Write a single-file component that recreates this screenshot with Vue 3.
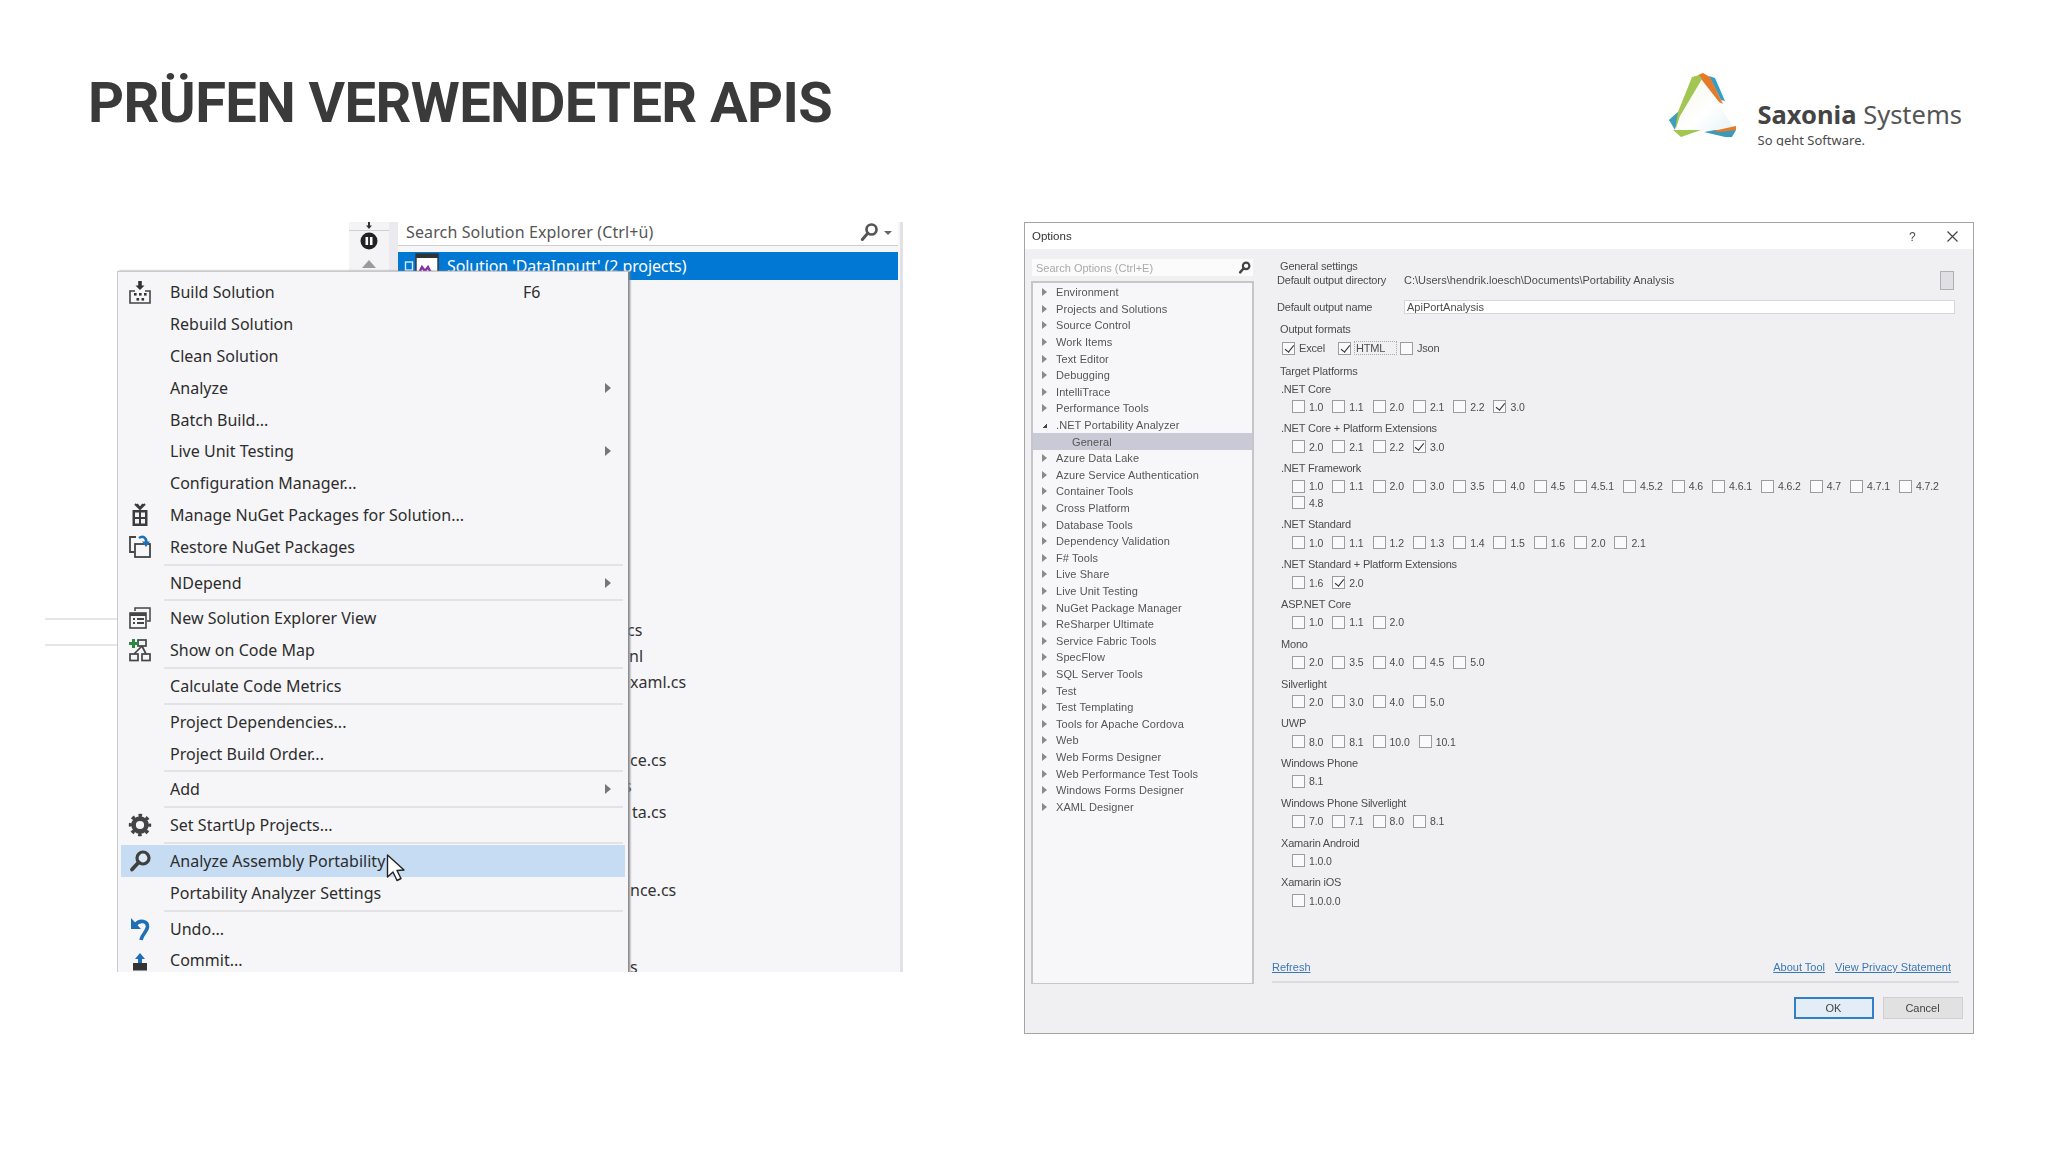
<script setup>
const menu = [
  { t: 'Build Solution', i: 'build', k: 'F6' },
  { t: 'Rebuild Solution' },
  { t: 'Clean Solution' },
  { t: 'Analyze', sub: true },
  { t: 'Batch Build...' },
  { t: 'Live Unit Testing', sub: true },
  { t: 'Configuration Manager...' },
  { t: 'Manage NuGet Packages for Solution...', i: 'nuget' },
  { t: 'Restore NuGet Packages', i: 'restore' },
  { sep: true },
  { t: 'NDepend', sub: true },
  { sep: true },
  { t: 'New Solution Explorer View', i: 'view' },
  { t: 'Show on Code Map', i: 'map' },
  { sep: true },
  { t: 'Calculate Code Metrics' },
  { sep: true },
  { t: 'Project Dependencies...' },
  { t: 'Project Build Order...' },
  { sep: true },
  { t: 'Add', sub: true },
  { sep: true },
  { t: 'Set StartUp Projects...', i: 'gear' },
  { sep: true },
  { t: 'Analyze Assembly Portability', i: 'search', hot: true },
  { t: 'Portability Analyzer Settings' },
  { sep: true },
  { t: 'Undo...', i: 'undo' },
  { t: 'Commit...', i: 'commit' }
]

const fragments = { 14: ['cs', 229], 15: ['nl', 231], 16: ['xaml.cs', 232], 19: ['ce.cs', 232], 20: ['s', 226], 21: ['ta.cs', 234], 24: ['nce.cs', 232], 27: ['s', 232] }
const fileRows = Array.from({ length: 28 }, (_, n) => fragments[n + 1] || null)

const tree = [
  'Environment', 'Projects and Solutions', 'Source Control', 'Work Items', 'Text Editor', 'Debugging', 'IntelliTrace',
  'Performance Tools', '.NET Portability Analyzer', 'General', 'Azure Data Lake', 'Azure Service Authentication',
  'Container Tools', 'Cross Platform', 'Database Tools', 'Dependency Validation', 'F# Tools', 'Live Share',
  'Live Unit Testing', 'NuGet Package Manager', 'ReSharper Ultimate', 'Service Fabric Tools', 'SpecFlow',
  'SQL Server Tools', 'Test', 'Test Templating', 'Tools for Apache Cordova', 'Web', 'Web Forms Designer',
  'Web Performance Test Tools', 'Windows Forms Designer', 'XAML Designer'
]

const groups = [
  { l: '.NET Core', v: ['1.0', '1.1', '2.0', '2.1', '2.2', '3.0'], on: ['3.0'] },
  { l: '.NET Core + Platform Extensions', v: ['2.0', '2.1', '2.2', '3.0'], on: ['3.0'] },
  { l: '.NET Framework', v: ['1.0', '1.1', '2.0', '3.0', '3.5', '4.0', '4.5', '4.5.1', '4.5.2', '4.6', '4.6.1', '4.6.2', '4.7', '4.7.1', '4.7.2', '4.8'], on: [] },
  { l: '.NET Standard', v: ['1.0', '1.1', '1.2', '1.3', '1.4', '1.5', '1.6', '2.0', '2.1'], on: [] },
  { l: '.NET Standard + Platform Extensions', v: ['1.6', '2.0'], on: ['2.0'] },
  { l: 'ASP.NET Core', v: ['1.0', '1.1', '2.0'], on: [] },
  { l: 'Mono', v: ['2.0', '3.5', '4.0', '4.5', '5.0'], on: [] },
  { l: 'Silverlight', v: ['2.0', '3.0', '4.0', '5.0'], on: [] },
  { l: 'UWP', v: ['8.0', '8.1', '10.0', '10.1'], on: [] },
  { l: 'Windows Phone', v: ['8.1'], on: [] },
  { l: 'Windows Phone Silverlight', v: ['7.0', '7.1', '8.0', '8.1'], on: [] },
  { l: 'Xamarin Android', v: ['1.0.0'], on: [] },
  { l: 'Xamarin iOS', v: ['1.0.0.0'], on: [] }
]
</script>

<template>
  <div class="slide">
    <header class="head">
      <h1 class="title">PRÜFEN VERWENDETER APIS</h1>
      <div class="logo">
        <svg class="logo-mark" width="75" height="70" viewBox="0 0 75 70">
          <defs>
            <linearGradient id="lgw" x1="0" y1="0" x2="1" y2="1">
              <stop offset="0" stop-color="#f3f6e6" />
              <stop offset="0.6" stop-color="#ffffff" />
              <stop offset="1" stop-color="#e6f2f4" />
            </linearGradient>
          </defs>
          <path d="M34 6 L6 60 L36 60 L68 60 Z" fill="url(#lgw)" />
          <path d="M42 6 L48 8 L58 31 L54 30 Z" fill="#2e9fc9" />
          <path d="M31 5 L36 3 L43 7 L56 34 L52 32 Z" fill="#e67a2b" />
          <path d="M25 7 L32 5 L35 9 L13 46 L9 58 L2 50 L11 42 Z" fill="#a3c552" />
          <path d="M2 50 L11 42 L8 60 Z" fill="#3f9fb8" />
          <path d="M6 60 L14 67 L34 60 L12 60 Z" fill="#a3c552" />
          <path d="M37 62 L48 60 L69 60 L65 67 L58 67 Z" fill="#3a9bb9" />
          <path d="M46 61 L69 56 L69 60 L52 62 Z" fill="#e67a2b" />
        </svg>
        <div class="logo-text">
          <div class="logo-name"><b>Saxonia</b> Systems</div>
          <div class="logo-tag"><span>So geht Software.</span></div>
        </div>
      </div>
    </header>

    <main class="stage">
      <section class="vs">
        <i class="ghost-line first"></i>
        <i class="ghost-line second"></i>

        <div class="explorer">
          <div class="tools">
            <svg class="tool-down" width="10" height="7" viewBox="0 0 10 7"><path d="M5 7 L2 3.5 H4 V0 H6 V3.5 H8 Z" fill="#333" /></svg>
            <div class="tool-rule"></div>
            <svg class="tool-pause" width="18" height="18" viewBox="0 0 18 18">
              <circle cx="9" cy="9" r="8.5" fill="#222" />
              <rect x="5.5" y="5" width="2.6" height="8" fill="#fff" />
              <rect x="9.9" y="5" width="2.6" height="8" fill="#fff" />
            </svg>
            <svg class="tool-up" width="14" height="8" viewBox="0 0 14 8"><path d="M7 0 L14 8 H0 Z" fill="#9a9a9e" /></svg>
          </div>
          <div class="strip"></div>
          <div class="files">
            <div class="search">
              <span>Search Solution Explorer (Ctrl+ü)</span>
              <svg class="search-ico" width="20" height="20" viewBox="0 0 24 24">
                <circle cx="15" cy="9" r="6" fill="none" stroke="#555" stroke-width="3.2" />
                <path d="M10.5 13.5 L4 21" stroke="#555" stroke-width="3.6" stroke-linecap="round" />
              </svg>
              <i class="search-drop"></i>
            </div>
            <div class="solution">
              <svg class="sol-ico" width="36" height="27" viewBox="0 0 36 27">
                <rect x="1.5" y="9" width="7" height="8" fill="none" stroke="#d8ecfa" stroke-width="1.4" />
                <rect x="12" y="1" width="22" height="26" fill="#fff" stroke="#333" stroke-width="1.4" />
                <rect x="12" y="1" width="22" height="4" fill="#333" />
                <path d="M15 20 L18 14 L21 18 L24 14 L27 20" fill="none" stroke="#8a2da8" stroke-width="2.4" />
              </svg>
              <span>Solution 'DataInputt' (2 projects)</span>
            </div>
            <div v-for="(r, n) in fileRows" :key="n" class="file-row" :style="r ? { paddingLeft: r[1] + 'px' } : null">
              <span v-if="r">{{ r[0] }}</span>
            </div>
          </div>
          <div class="edge"></div>
        </div>

        <div class="menu">
          <template v-for="(m, n) in menu" :key="n">
            <div v-if="m.sep" class="msep"></div>
            <div v-else class="mrow" :class="{ hot: m.hot }">
              <span class="mico">
                <svg v-if="m.i === 'build'" width="24" height="24" viewBox="0 0 24 24">
                  <path d="M12 10 L7.5 5.5 H10.2 V1 H13.8 V5.5 H16.5 Z" fill="#333" />
                  <path d="M7 11 H2 V23 H22 V11 H17" fill="none" stroke="#444" stroke-width="1.6" />
                  <g fill="#333"><rect x="6" y="13" width="2.6" height="2.6" /><rect x="11" y="13" width="2.6" height="2.6" /><rect x="16" y="13" width="2.6" height="2.6" /><rect x="8.5" y="18" width="2.6" height="2.6" /><rect x="13.5" y="18" width="2.6" height="2.6" /></g>
                </svg>
                <svg v-else-if="m.i === 'nuget'" width="24" height="24" viewBox="0 0 24 24">
                  <path d="M7 1 L12 6 L17 1 M9 1 L12 5 L15 1" fill="none" stroke="#3c3c3c" stroke-width="2" />
                  <rect x="4.5" y="7" width="15" height="16" fill="#3c3c3c" />
                  <g fill="#f2f2f4"><rect x="7" y="9.5" width="4" height="4.5" /><rect x="13" y="9.5" width="4" height="4.5" /><rect x="7" y="16" width="4" height="4.5" /><rect x="13" y="16" width="4" height="4.5" /></g>
                </svg>
                <svg v-else-if="m.i === 'restore'" width="24" height="24" viewBox="0 0 24 24">
                  <path d="M8 2 H2 V17 H6" fill="none" stroke="#444" stroke-width="1.8" />
                  <rect x="7" y="9" width="15" height="13" fill="none" stroke="#444" stroke-width="1.8" />
                  <path d="M11 3 C15 0 19 3 18 8" fill="none" stroke="#1e6fb5" stroke-width="2.6" />
                  <path d="M14 6.5 L18 12 L22 6.5 Z" fill="#1e6fb5" />
                </svg>
                <svg v-else-if="m.i === 'view'" width="24" height="24" viewBox="0 0 24 24">
                  <path d="M7 5 V2 H22 V15 H19" fill="none" stroke="#444" stroke-width="1.5" />
                  <rect x="2" y="7" width="16" height="15" fill="#f6f6f8" stroke="#444" stroke-width="1.6" />
                  <rect x="2" y="7" width="16" height="3" fill="#444" />
                  <g fill="#444"><rect x="5" y="12" width="2" height="2" /><rect x="9" y="12" width="7" height="2" /><rect x="5" y="16" width="2" height="2" /><rect x="9" y="16" width="7" height="2" /></g>
                </svg>
                <svg v-else-if="m.i === 'map'" width="24" height="24" viewBox="0 0 24 24">
                  <rect x="10" y="2" width="8" height="6" fill="none" stroke="#444" stroke-width="1.7" />
                  <rect x="2" y="16" width="8" height="6.5" fill="none" stroke="#444" stroke-width="1.7" />
                  <rect x="14" y="16" width="8" height="6.5" fill="none" stroke="#444" stroke-width="1.7" />
                  <path d="M14 8 L6 16 M14 8 L18 16" stroke="#444" stroke-width="1.7" />
                  <path d="M4 1 H7 V4 H10 V7 H7 V10 H4 V7 H1 V4 H4 Z" fill="#2c8a3f" />
                </svg>
                <svg v-else-if="m.i === 'gear'" width="24" height="24" viewBox="0 0 24 24">
                  <circle cx="12" cy="12" r="6.4" fill="none" stroke="#444" stroke-width="4.6" />
                  <circle cx="12" cy="12" r="9.6" fill="none" stroke="#444" stroke-width="3.2" stroke-dasharray="3.6 3.94" stroke-dashoffset="1.8" />
                </svg>
                <svg v-else-if="m.i === 'search'" width="24" height="24" viewBox="0 0 24 24">
                  <circle cx="15" cy="9" r="6" fill="#dbe8f6" stroke="#3f3f3f" stroke-width="3.2" />
                  <path d="M10.5 13.5 L4 20.5" stroke="#3f3f3f" stroke-width="3.8" stroke-linecap="round" />
                </svg>
                <svg v-else-if="m.i === 'undo'" width="24" height="26" viewBox="0 0 24 26">
                  <path d="M7 9 C12 3 20 5 19.5 11 C19 16 14 18 13 24" fill="none" stroke="#1e6fb5" stroke-width="3.6" />
                  <path d="M3 2 V13 H13 Z" fill="#1e6fb5" />
                </svg>
                <svg v-else-if="m.i === 'commit'" width="24" height="24" viewBox="0 0 24 24">
                  <path d="M12 5 L17 11 H14 V15 H10 V11 H7 Z" fill="#1e6fb5" />
                  <rect x="5" y="15" width="14" height="7.5" fill="#333" />
                </svg>
              </span>
              <span class="mlabel">{{ m.t }}</span>
              <span v-if="m.k" class="mkey">{{ m.k }}</span>
              <i v-if="m.sub" class="marrow"></i>
            </div>
          </template>
          <svg class="pointer" width="20" height="28" viewBox="0 0 20 28">
            <path d="M1.5 1 V23 L7 18 L11 26.5 L15 24.5 L11 16.5 L18 16 Z" fill="#fff" stroke="#222" stroke-width="1.4" stroke-linejoin="round" />
          </svg>
        </div>
      </section>

      <section class="dialog">
        <div class="dlg-title">
          <span class="dlg-name">Options</span>
          <span class="dlg-help">?</span>
          <svg class="dlg-close" width="11" height="11" viewBox="0 0 11 11"><path d="M.5 .5 L10.5 10.5 M10.5 .5 L.5 10.5" stroke="#444" stroke-width="1.2" /></svg>
        </div>
        <div class="dlg-body">
          <aside class="dlg-left">
            <div class="opt-search">
              <span>Search Options (Ctrl+E)</span>
              <svg width="13" height="13" viewBox="0 0 24 24">
                <circle cx="15" cy="9" r="6" fill="none" stroke="#444" stroke-width="4" />
                <path d="M10.5 13.5 L4 21" stroke="#444" stroke-width="4.5" stroke-linecap="round" />
              </svg>
            </div>
            <div class="opt-tree">
              <div v-for="item in tree" :key="item" class="tree-row" :class="{ sel: item === 'General', open: item === '.NET Portability Analyzer' }">
                <i v-if="item !== 'General'" class="tw"></i>
                <span>{{ item }}</span>
              </div>
            </div>
          </aside>
          <div class="dlg-right">
            <div class="d-line d-head">General settings</div>
            <div class="d-line d-dir">
              <span class="d-key">Default output directory</span>
              <span>C:\Users\hendrik.loesch\Documents\Portability Analysis</span>
              <span class="dir-btn"></span>
            </div>
            <div class="d-line d-name">
              <span class="d-key">Default output name</span>
              <span class="d-input">ApiPortAnalysis</span>
            </div>
            <div class="d-line d-head d-formats">Output formats</div>
            <div class="formats">
              <label class="fmt fmt-excel"><i class="cb on"></i>Excel</label>
              <label class="fmt fmt-html"><i class="cb on"></i><span class="focus">HTML</span></label>
              <label class="fmt"><i class="cb"></i>Json</label>
            </div>
            <div class="d-line d-head d-target">Target Platforms</div>
            <div class="groups">
              <div v-for="g in groups" :key="g.l" class="group">
                <div class="g-label">{{ g.l }}</div>
                <div class="g-items">
                  <label v-for="v in g.v" :key="v" class="g-item">
                    <i class="cb" :class="{ on: g.on.includes(v) }"></i>{{ v }}
                  </label>
                </div>
              </div>
            </div>
            <div class="foot">
              <div class="links">
                <a>Refresh</a>
                <span class="links-right"><a>About Tool</a><a>View Privacy Statement</a></span>
              </div>
              <div class="foot-rule"></div>
              <div class="btns">
                <span class="btn primary">OK</span>
                <span class="btn">Cancel</span>
              </div>
            </div>
          </div>
        </div>
      </section>
    </main>
  </div>
</template>

<style scoped>
.slide { width: 2048px; height: 1152px; background: #fff; overflow: hidden; display: flex; flex-direction: column; }

.head { height: 222px; flex: none; display: flex; justify-content: space-between; align-items: flex-start; padding: 0 86px 0 88px; box-sizing: border-box; }
.title { margin: 0; padding-top: 69px; font: 700 56px/68px Roboto, sans-serif; color: #3a3a3a; letter-spacing: -.58px; white-space: nowrap; }
.logo { display: flex; margin-top: 70px; gap: 16px; }
.logo-mark { flex: none; }
.logo-text { padding-top: 29px; color: #4a4a4a; font-family: "Noto Sans", sans-serif; }
.logo-name { font-size: 25.5px; line-height: 30px; white-space: nowrap; font-weight: 400; color: #555; }
.logo-name b { font-weight: 700; color: #444; }
.logo-tag { height: 14px; overflow: hidden; font-size: 13px; line-height: 17px; margin-top: 3px; }

.stage { flex: none; height: 812px; display: flex; padding-left: 45px; align-items: flex-start; }

.vs { position: relative; width: 858px; height: 750px; flex: none; font-family: "Noto Sans", sans-serif; overflow: hidden; }
.ghost-line { position: absolute; left: 0; width: 74px; height: 2px; background: #e6e6e6; }
.ghost-line.first { top: 396px; }
.ghost-line.second { top: 422px; }

.explorer { margin-left: 304px; height: 100%; display: flex; background: #f6f6f9; }
.tools { width: 40px; flex: none; display: flex; flex-direction: column; align-items: center; background: #f4f4f6; }
.tool-rule { width: 40px; height: 1px; background: #cfcfd3; margin-top: 1px; }
.tool-pause { margin-top: 1px; }
.tool-up { margin-top: 10px; }
.strip { width: 9px; flex: none; background: #ebebef; }
.files { width: 500px; flex: none; }
.search { height: 23px; background: #fff; border-bottom: 1px solid #cdcdd2; display: flex; align-items: center; padding: 0 0 3px 8px; box-sizing: content-box; height: 20px; color: #555; font-size: 16px; letter-spacing: .13px; position: relative; }
.search-ico { position: absolute; left: 461px; top: 0; }
.search-drop { position: absolute; left: 486px; top: 9px; border: 4px solid transparent; border-top: 4px solid #666; border-bottom: 0; }
.solution { margin-top: 6px; height: 28px; background: #0078d4; color: #fff; font-size: 16px; display: flex; align-items: center; overflow: hidden; letter-spacing: -.1px; }
.sol-ico { margin-left: 6px; margin-right: 7px; flex: none; }
.file-row { height: 25.95px; font-size: 16px; line-height: 26px; color: #333; white-space: nowrap; box-sizing: border-box; }
.edge { width: 3px; margin-left: 2px; background: #e2e2e6; flex: none; }

.menu { position: absolute; left: 72px; top: 49px; width: 511px; height: 720px; box-sizing: border-box; padding: 4.5px 3px 0; background: #f6f6f8; border-left: 1px solid #c9c9cd; border-top: 1px solid #c9c9cd; box-shadow: 2px 0 2px #85858a; }
.mrow { height: 31.8px; display: flex; align-items: center; color: #2d2d2d; font-size: 16px; letter-spacing: .02px; white-space: nowrap; }
.mrow.hot { background: #c5dcf3; }
.mico { width: 38px; flex: none; display: flex; align-items: center; justify-content: center; }
.mlabel { margin-left: 11px; width: 353px; flex: none; }
.marrow { margin-left: 82px; border: 5px solid transparent; border-left: 6px solid #777; border-right: 0; }
.msep { height: 4px; margin-left: 43px; width: 459px; display: flex; align-items: center; }
.msep::before { content: ""; display: block; width: 100%; height: 2px; background: #e3e3e6; }
.pointer { position: absolute; left: 268px; top: 582px; }

.dialog { margin-left: 121px; width: 950px; height: 812px; flex: none; box-sizing: border-box; border: 1px solid #a4a4a8; display: flex; flex-direction: column; background: #f0f0f3; font: 11px "Liberation Sans", sans-serif; color: #4c4c4c; filter: blur(.6px); }
.dlg-title { height: 26px; flex: none; background: #fff; display: flex; align-items: center; padding-left: 7px; position: relative; }
.dlg-name { font-size: 11.5px; color: #333; }
.dlg-help { position: absolute; left: 884px; top: 7px; font-size: 12px; }
.dlg-close { position: absolute; left: 922px; top: 8px; }
.dlg-body { flex: 1; display: flex; min-height: 0; }

.dlg-left { width: 237px; flex: none; padding: 10px 0 0 6px; box-sizing: border-box; }
.opt-search { width: 221px; height: 17px; margin-left: 1px; background: #fbfbfc; display: flex; align-items: center; justify-content: space-between; padding: 0 2px 0 4px; box-sizing: border-box; color: #aaa; font-size: 11px; }
.opt-tree { margin-top: 5px; width: 223px; height: 703px; box-sizing: border-box; background: #f7f7f9; border: 2px solid #c6c6ca; border-bottom-width: 1px; padding-top: 1px; }
.tree-row { height: 16.6px; display: flex; align-items: center; padding-left: 9px; font-size: 11px; color: #555; letter-spacing: .08px; white-space: nowrap; }
.tw { width: 0; height: 0; margin-right: 9px; border: 4px solid transparent; border-left: 5px solid #8a8a8e; border-right: 0; flex: none; }
.tree-row.open .tw { border: 0; width: 5px; height: 5px; margin-right: 9px; background: linear-gradient(135deg, transparent 50%, #444 50%); }
.tree-row.sel { background: #cacad6; padding-left: 39px; }

.dlg-right { flex: 1; display: flex; flex-direction: column; min-width: 0; padding: 10px 13px 14px 10px; box-sizing: border-box; position: relative; }
.d-line { height: 14px; line-height: 14px; white-space: nowrap; flex: none; }
.d-head { padding-left: 8px; letter-spacing: -.15px; }
.d-dir, .d-name { display: flex; align-items: center; padding-left: 5px; }
.d-key { width: 127px; flex: none; letter-spacing: -.2px; }
.dir-btn { margin-left: auto; margin-right: -1px; width: 12px; height: 17px; border: 1px solid #b0b0b4; background: #e0e0e4; flex: none; }
.d-dir { padding-right: 7px; }
.d-name { margin-top: 13px; padding-right: 5px; }
.d-input { flex: 1; height: 14px; line-height: 13px; background: #fff; border: 1px solid #d6d6da; box-sizing: border-box; padding-left: 2px; }
.d-formats { margin-top: 8px; }
.formats { display: flex; height: 18px; margin-top: 3px; padding-left: 10px; align-items: center; flex: none; letter-spacing: -.2px; }
.fmt { display: flex; align-items: center; }
.fmt-excel { width: 56px; }
.fmt-html { width: 62px; }
.focus { border: 1px dotted #aaa; padding: 0 11px 0 1px; margin-left: -1px; }
.d-target { margin-top: 6.5px; }
.groups { margin-top: 2px; padding-left: 9px; flex: none; }
.group { margin-bottom: 4.2px; }
.g-label { height: 19px; line-height: 19px; white-space: nowrap; letter-spacing: -.2px; }
.g-items { display: flex; flex-wrap: wrap; padding-left: 11px; width: 680px; box-sizing: border-box; }
.g-item { height: 16.6px; display: flex; align-items: center; margin-right: 9px; font-size: 10.5px; letter-spacing: -.1px; }
.cb { width: 13px; height: 13px; flex: none; box-sizing: border-box; border: 1px solid #9c9ca0; background: #fafafb; margin-right: 4px; position: relative; display: block; }
.cb.on::after { content: ""; position: absolute; left: 3.5px; top: 0; width: 3.5px; height: 8px; border: solid #333; border-width: 0 1.8px 1.8px 0; transform: rotate(38deg); }

.foot { margin-top: auto; flex: none; }
.links { display: flex; justify-content: space-between; height: 14px; line-height: 14px; color: #3a78b5; padding: 1px 9px 0 0; box-sizing: content-box; }
.links a { text-decoration: underline; }
.links-right { display: flex; gap: 10px; }
.foot-rule { height: 2px; margin-top: 7px; margin-right: 1px; background: #dcdcde; }
.btns { display: flex; justify-content: flex-end; gap: 9px; margin-top: 14px; margin-right: -2.5px; }
.btn { width: 80px; height: 22px; box-sizing: border-box; border: 1px solid #cfcfd2; background: #e1e1e1; display: flex; align-items: center; justify-content: center; color: #444; }
.btn.primary { border: 2px solid #2f80c8; background: #e3edf5; }
</style>
